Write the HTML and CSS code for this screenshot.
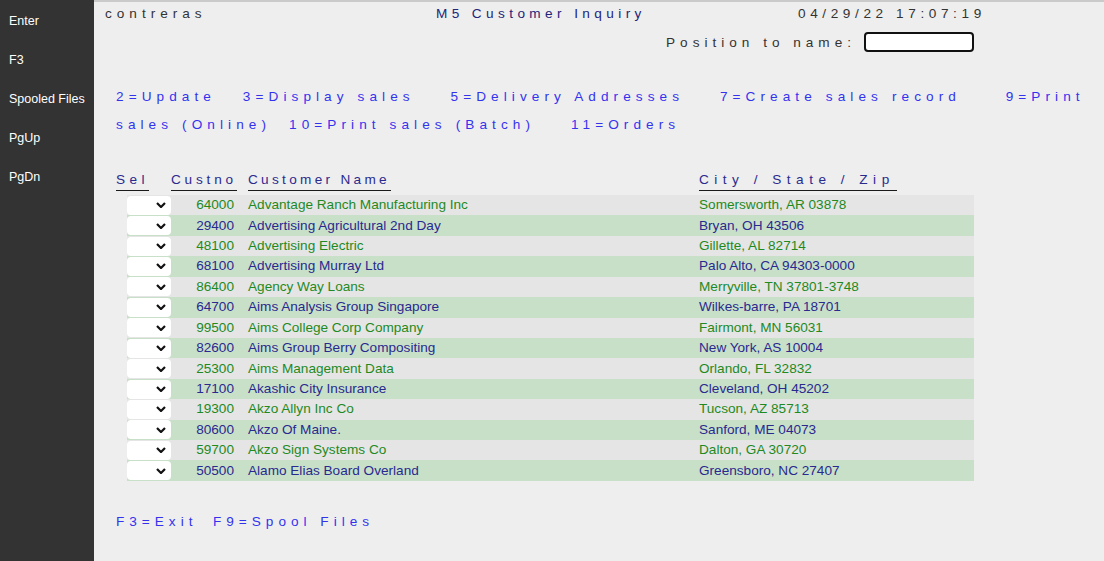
FILE: index.html
```html
<!DOCTYPE html>
<html>
<head>
<meta charset="utf-8">
<link rel="stylesheet" href="styles.css">
</head>
<body>
<div class="app">
  <nav class="side">
    <div class="side-item">Enter</div>
    <div class="side-item">F3</div>
    <div class="side-item">Spooled Files</div>
    <div class="side-item">PgUp</div>
    <div class="side-item">PgDn</div>
  </nav>
  <main class="main">
    <div class="hdr">
      <span class="user">contreras</span>
      <span class="title">M5 Customer Inquiry</span>
      <span class="stamp">04/29/22 17:07:19</span>
    </div>
    <div class="pos">
      <span class="pos-label">Position to name:</span>
      <span class="pos-input"></span>
    </div>
    <div class="cmds">2=Update   3=Display sales    5=Delivery Addresses    7=Create sales record     9=Print sales (Online)  10=Print sales (Batch)    11=Orders</div>
    <div class="thead">
      <span class="th th-sel">Sel</span>
      <span class="th th-no">Custno</span>
      <span class="th th-name">Customer Name</span>
      <span class="th th-city">City / State / Zip</span>
    </div>
    <div class="rows">
      <div class="row odd"><span class="sel"><svg viewBox="0 0 10 6" width="10" height="6"><polyline points="1,1 5,5 9,1"/></svg></span><span class="no">64000</span><span class="name">Advantage Ranch Manufacturing Inc</span><span class="city">Somersworth, AR 03878</span></div>
      <div class="row even"><span class="sel"><svg viewBox="0 0 10 6" width="10" height="6"><polyline points="1,1 5,5 9,1"/></svg></span><span class="no">29400</span><span class="name">Advertising Agricultural 2nd Day</span><span class="city">Bryan, OH 43506</span></div>
      <div class="row odd"><span class="sel"><svg viewBox="0 0 10 6" width="10" height="6"><polyline points="1,1 5,5 9,1"/></svg></span><span class="no">48100</span><span class="name">Advertising Electric</span><span class="city">Gillette, AL 82714</span></div>
      <div class="row even"><span class="sel"><svg viewBox="0 0 10 6" width="10" height="6"><polyline points="1,1 5,5 9,1"/></svg></span><span class="no">68100</span><span class="name">Advertising Murray Ltd</span><span class="city">Palo Alto, CA 94303-0000</span></div>
      <div class="row odd"><span class="sel"><svg viewBox="0 0 10 6" width="10" height="6"><polyline points="1,1 5,5 9,1"/></svg></span><span class="no">86400</span><span class="name">Agency Way Loans</span><span class="city">Merryville, TN 37801-3748</span></div>
      <div class="row even"><span class="sel"><svg viewBox="0 0 10 6" width="10" height="6"><polyline points="1,1 5,5 9,1"/></svg></span><span class="no">64700</span><span class="name">Aims Analysis Group Singapore</span><span class="city">Wilkes-barre, PA 18701</span></div>
      <div class="row odd"><span class="sel"><svg viewBox="0 0 10 6" width="10" height="6"><polyline points="1,1 5,5 9,1"/></svg></span><span class="no">99500</span><span class="name">Aims College Corp Company</span><span class="city">Fairmont, MN 56031</span></div>
      <div class="row even"><span class="sel"><svg viewBox="0 0 10 6" width="10" height="6"><polyline points="1,1 5,5 9,1"/></svg></span><span class="no">82600</span><span class="name">Aims Group Berry Compositing</span><span class="city">New York, AS 10004</span></div>
      <div class="row odd"><span class="sel"><svg viewBox="0 0 10 6" width="10" height="6"><polyline points="1,1 5,5 9,1"/></svg></span><span class="no">25300</span><span class="name">Aims Management Data</span><span class="city">Orlando, FL 32832</span></div>
      <div class="row even"><span class="sel"><svg viewBox="0 0 10 6" width="10" height="6"><polyline points="1,1 5,5 9,1"/></svg></span><span class="no">17100</span><span class="name">Akashic City Insurance</span><span class="city">Cleveland, OH 45202</span></div>
      <div class="row odd"><span class="sel"><svg viewBox="0 0 10 6" width="10" height="6"><polyline points="1,1 5,5 9,1"/></svg></span><span class="no">19300</span><span class="name">Akzo Allyn Inc Co</span><span class="city">Tucson, AZ 85713</span></div>
      <div class="row even"><span class="sel"><svg viewBox="0 0 10 6" width="10" height="6"><polyline points="1,1 5,5 9,1"/></svg></span><span class="no">80600</span><span class="name">Akzo Of Maine.</span><span class="city">Sanford, ME 04073</span></div>
      <div class="row odd"><span class="sel"><svg viewBox="0 0 10 6" width="10" height="6"><polyline points="1,1 5,5 9,1"/></svg></span><span class="no">59700</span><span class="name">Akzo Sign Systems Co</span><span class="city">Dalton, GA 30720</span></div>
      <div class="row even"><span class="sel"><svg viewBox="0 0 10 6" width="10" height="6"><polyline points="1,1 5,5 9,1"/></svg></span><span class="no">50500</span><span class="name">Alamo Elias Board Overland</span><span class="city">Greensboro, NC 27407</span></div>
    </div>
    <div class="foot">
      <span class="fkey">F3=Exit</span>
      <span class="fkey">F9=Spool Files</span>
    </div>
  </main>
</div>
</body>
</html>
```
FILE: styles.css
```css
* { box-sizing: border-box; }
html, body { margin: 0; padding: 0; }
body {
  font-family: "Liberation Sans", Arial, sans-serif;
  font-size: 13.6px;
  background: #eeeeee;
  width: 1104px;
  height: 561px;
  overflow: hidden;
}
.app {
  display: flex;
  height: 561px;
}
.side {
  width: 94px;
  flex: 0 0 94px;
  background: #333333;
  padding-top: 11px;
  display: flex;
  flex-direction: column;
  gap: 19px;
}
.side-item {
  color: #ffffff;
  font-size: 12.5px;
  line-height: 20px;
  padding-left: 9px;
}
.main {
  flex: 1;
  background: #eeeeee;
  border-top: 2px solid #cacaca;
  padding-top: 2px;
  padding-left: 11px;
}
.hdr {
  display: grid;
  grid-template-columns: 331px 362px auto;
  line-height: 20px;
}
.user { color: #333333; letter-spacing: 5px; }
.title { color: #24247a; letter-spacing: 4.4px; }
.stamp { color: #333333; letter-spacing: 4.6px; }
.pos {
  display: flex;
  align-items: center;
  margin-top: 8px;
  margin-left: 561px;
  height: 20px;
}
.pos-label {
  color: #333333;
  letter-spacing: 5px;
  width: 198px;
  white-space: nowrap;
}
.pos-input {
  display: block;
  width: 110px;
  height: 20px;
  background: #ffffff;
  border: 2px solid #111111;
  border-radius: 4px;
}
.cmds {
  margin-top: 31px;
  padding-left: 11px;
  padding-right: 10px;
  line-height: 28px;
  letter-spacing: 5.08px;
  word-spacing: 0.1px;
  color: #3333ee;
  white-space: pre-wrap;
}
.thead {
  display: flex;
  margin-top: 31px;
  margin-left: 11px;
  height: 21px;
}
.th {
  display: block;
  flex: 0 0 auto;
  line-height: 20px;
  border-bottom: 1px solid #1a1a1a;
  color: #2a2a8e;
  white-space: nowrap;
}
.th-sel { width: 33px; letter-spacing: 4.4px; }
.th-no { width: 66px; margin-left: 22px; letter-spacing: 3.8px; }
.th-name { width: 143px; margin-left: 11px; letter-spacing: 3.3px; }
.th-city { width: 198px; margin-left: 308px; letter-spacing: 5.5px; }
.rows {
  margin-top: 4px;
  margin-left: 22px;
  width: 847px;
}
.row {
  display: grid;
  grid-template-columns: 44px 63px 465px auto;
  align-items: center;
  height: 20.43px;
  line-height: 20px;
}
.row.odd { background: #e5e5e5; color: #1f8a1f; }
.row.even { background: #c8e0c8; color: #29298f; }
.sel {
  display: flex;
  align-items: center;
  justify-content: flex-end;
  padding-right: 5px;
  height: 19px;
  background: #ffffff;
  border-radius: 4px;
}
.sel svg {
  fill: none;
  stroke: #111111;
  stroke-width: 2.2;
}
.no { text-align: right; }
.name { padding-left: 14px; }
.foot {
  display: flex;
  margin-top: 31px;
  padding-left: 11px;
  line-height: 20px;
  letter-spacing: 5px;
  color: #3333ee;
  white-space: nowrap;
}
.fkey:first-child { width: 97px; }
```
